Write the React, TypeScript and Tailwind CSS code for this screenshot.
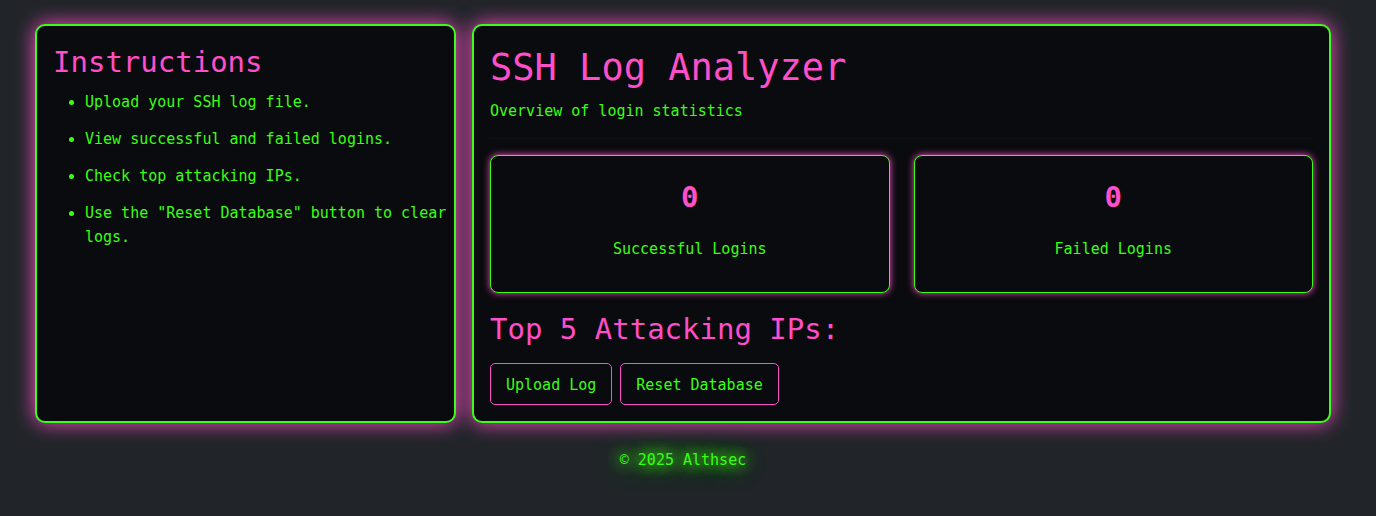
import React from "react";

const instructions: string[] = [
  "Upload your SSH log file.",
  "View successful and failed logins.",
  "Check top attacking IPs.",
  'Use the "Reset Database" button to clear logs.',
];

const panel =
  "rounded-[10px] border-2 border-[#39ff14] bg-[#0a0b0e] p-4 shadow-[0_0_20px_#ff4ec9]";

function StatCard({ value, label }: { value: number; label: string }) {
  return (
    <div className="rounded-lg border border-[#39ff14] bg-[#0a0b0e] p-4 text-center shadow-[0_0_7px_#ff4ec9]">
      <p className="mb-[15px] text-[29px] leading-[50px] font-bold text-[#ff4ec9]">{value}</p>
      <p className="mb-[15px]">{label}</p>
    </div>
  );
}

function ActionButton({ children }: { children: React.ReactNode }) {
  return (
    <button
      type="button"
      className="rounded-[5px] border border-[#ff4ec9] px-[15px] pt-[9px] pb-[7px] leading-6 hover:bg-[#ff4ec9]/10"
    >
      {children}
    </button>
  );
}

export default function App() {
  return (
    <div className="min-h-screen bg-[#212529] pr-[10px] font-['DejaVu_Sans_Mono',monospace] text-[15px] leading-6 text-[#39ff14]">
      <div className="mx-auto max-w-[1320px] px-3 pt-6">
        <div className="grid gap-4 md:grid-cols-[421fr_859fr]">
          <aside className={`${panel} pr-1`}>
            <h2 className="mb-2 text-[29px] leading-[40px] text-[#ff4ec9]">Instructions</h2>
            <ul className="list-disc pl-8">
              {instructions.map((text) => (
                <li key={text} className="mb-[13px]">
                  {text}
                </li>
              ))}
            </ul>
          </aside>
          <main className={panel}>
            <h1 className="mb-[5px] text-[37px] leading-[52px] text-[#ff4ec9]">SSH Log Analyzer</h1>
            <p>Overview of login statistics</p>
            <hr className="mt-[15px] mb-4 border-t border-[#101114]" />
            <div className="grid gap-6 sm:grid-cols-2">
              <StatCard value={0} label="Successful Logins" />
              <StatCard value={0} label="Failed Logins" />
            </div>
            <h2 className="mt-4 text-[29px] leading-[40px] text-[#ff4ec9]">
              Top 5 Attacking IPs:
            </h2>
            <div className="mt-[14px] flex flex-wrap gap-2">
              <ActionButton>Upload Log</ActionButton>
              <ActionButton>Reset Database</ActionButton>
            </div>
          </main>
        </div>
        <footer className="pt-[25px] pb-6 text-center [text-shadow:0_0_15px_#39ff14,0_0_15px_#39ff14,0_0_30px_#39ff14]">
          © 2025 Althsec
        </footer>
      </div>
    </div>
  );
}
